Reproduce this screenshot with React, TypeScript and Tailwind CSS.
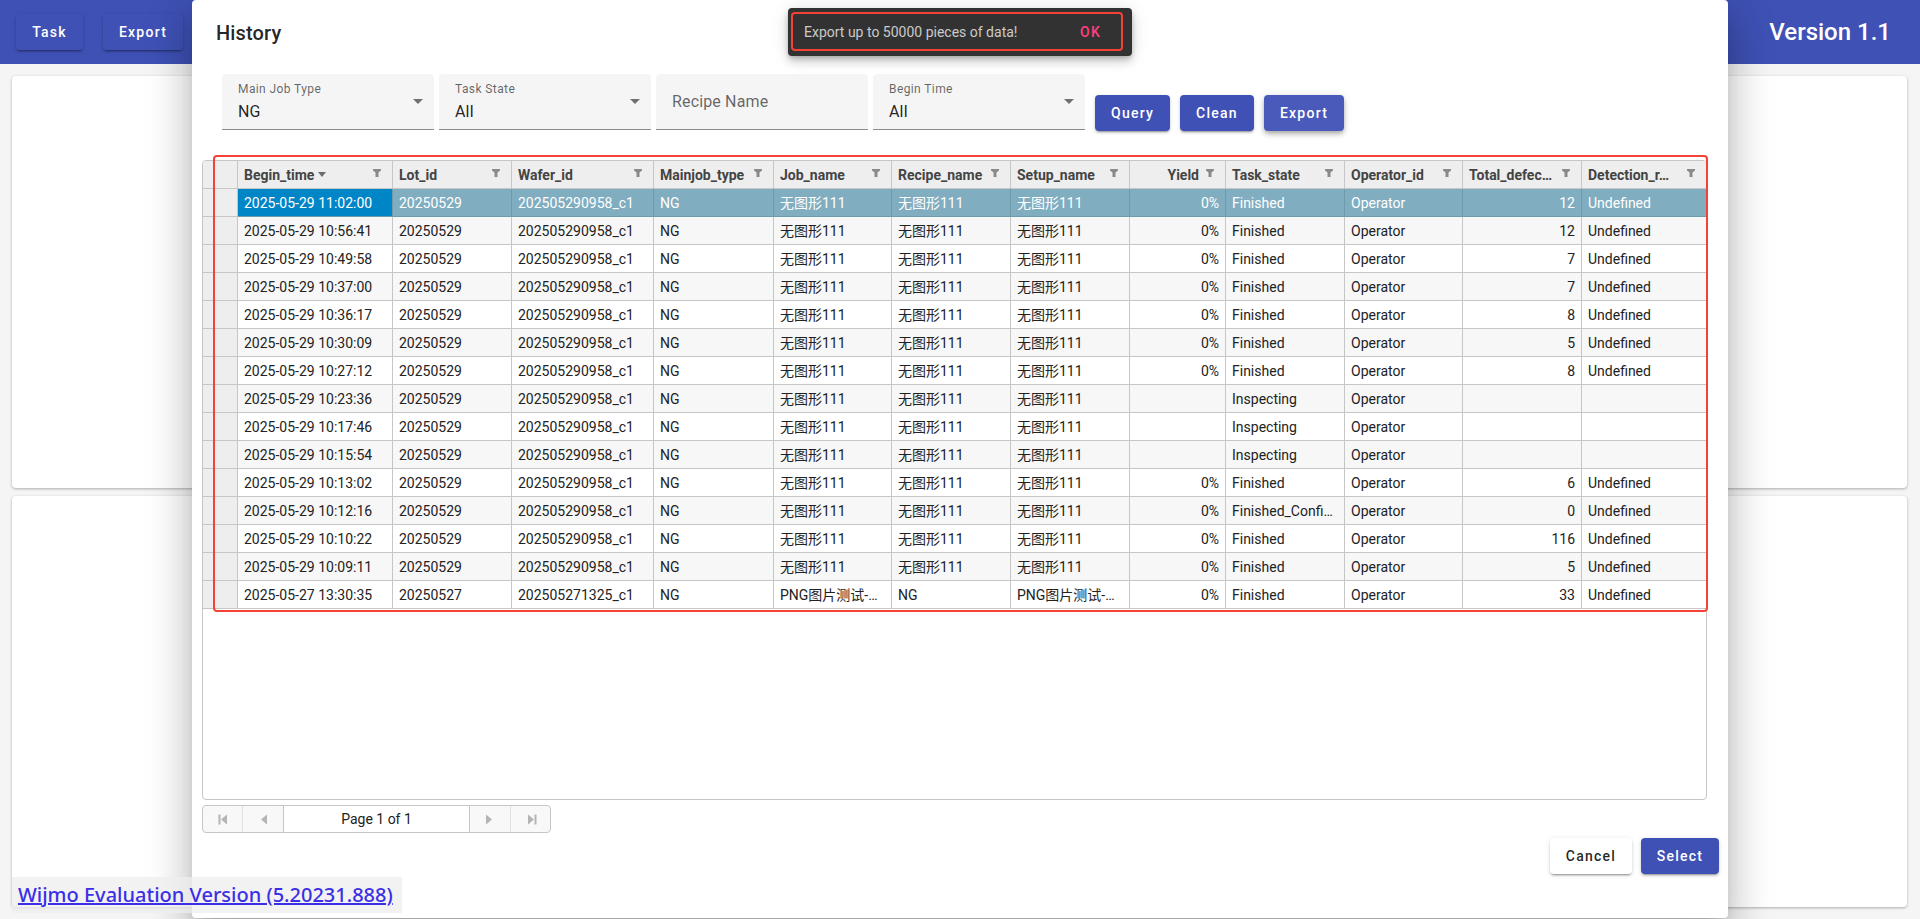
import { ChevronDown } from 'lucide-react'

const ROW_COLS = 'grid grid-cols-[35px_155px_119px_142px_120px_118px_119px_119px_96px_119px_118px_119px_124px]'
const FONT = "font-['Roboto',_'Noto_Sans_CJK_SC',_sans-serif]"

const headers = [
  { label: 'Begin_time', sort: true },
  { label: 'Lot_id' },
  { label: 'Wafer_id' },
  { label: 'Mainjob_type' },
  { label: 'Job_name' },
  { label: 'Recipe_name' },
  { label: 'Setup_name' },
  { label: 'Yield', right: true },
  { label: 'Task_state' },
  { label: 'Operator_id' },
  { label: 'Total_defec…' },
  { label: 'Detection_r…' },
]

const job = '无图形111'

const makeRow = (time: string, state: string, yieldVal: string, total: string, result: string) => [
  time, '20250529', '202505290958_c1', 'NG', job, job, job, yieldVal, state, 'Operator', total, result,
]

const rows = [
  makeRow('2025-05-29 11:02:00', 'Finished', '0%', '12', 'Undefined'),
  makeRow('2025-05-29 10:56:41', 'Finished', '0%', '12', 'Undefined'),
  makeRow('2025-05-29 10:49:58', 'Finished', '0%', '7', 'Undefined'),
  makeRow('2025-05-29 10:37:00', 'Finished', '0%', '7', 'Undefined'),
  makeRow('2025-05-29 10:36:17', 'Finished', '0%', '8', 'Undefined'),
  makeRow('2025-05-29 10:30:09', 'Finished', '0%', '5', 'Undefined'),
  makeRow('2025-05-29 10:27:12', 'Finished', '0%', '8', 'Undefined'),
  makeRow('2025-05-29 10:23:36', 'Inspecting', '', '', ''),
  makeRow('2025-05-29 10:17:46', 'Inspecting', '', '', ''),
  makeRow('2025-05-29 10:15:54', 'Inspecting', '', '', ''),
  makeRow('2025-05-29 10:13:02', 'Finished', '0%', '6', 'Undefined'),
  makeRow('2025-05-29 10:12:16', 'Finished_Confi…', '0%', '0', 'Undefined'),
  makeRow('2025-05-29 10:10:22', 'Finished', '0%', '116', 'Undefined'),
  makeRow('2025-05-29 10:09:11', 'Finished', '0%', '5', 'Undefined'),
  [
    '2025-05-27 13:30:35', '20250527', '202505271325_c1', 'NG', 'PNG图片测试-…', 'NG', 'PNG图片测试-…',
    '0%', 'Finished', 'Operator', '33', 'Undefined',
  ],
]

// columns 7 (Yield) and 10 (Total) hold right aligned numbers
const rightCols = [7, 10]

function FilterIcon() {
  return (
    <svg width="8" height="8" viewBox="0 0 8 8" className="shrink-0 -mt-[3px]">
      <polygon points="0,0 8,0 8,1.5 5.5,3.5 5.5,8 2.5,8 2.5,3.5 0,1.5" fill="#8a8a8a" />
    </svg>
  )
}

function SelectField({ label, value }: { label: string; value: string }) {
  return (
    <div className="relative h-[56px] w-[212px] rounded-t bg-[#f5f5f5] border-b border-[#8c8c8c] pl-4 pt-[8px]">
      <div className="text-[12px] leading-[14px] tracking-[0.4px] text-[rgba(0,0,0,0.6)]">{label}</div>
      <div className="mt-[4px] text-[16px] leading-[24px] tracking-[0.15px] text-[rgba(0,0,0,0.87)]">{value}</div>
      <span className="absolute right-[11px] top-[25px] h-0 w-0 border-x-[5px] border-t-[5px] border-x-transparent border-t-[rgba(0,0,0,0.54)]" />
    </div>
  )
}

function RaisedButton({ children, className }: { children: React.ReactNode; className: string }) {
  return (
    <button
      className={`h-[36px] rounded px-4 text-[14px] font-medium tracking-[1.25px] shadow-[0_3px_1px_-2px_rgba(0,0,0,0.2),0_2px_2px_0_rgba(0,0,0,0.14),0_1px_5px_0_rgba(0,0,0,0.12)] ${className}`}
    >
      {children}
    </button>
  )
}

function PagerIcon({ dir, bar }: { dir: 'left' | 'right'; bar?: boolean }) {
  const left = dir === 'left'
  return (
    <svg width="10" height="11" viewBox="0 0 10 11">
      {left ? <polygon points="9,0.5 9,10.5 3,5.5" fill="#b4b4b4" /> : <polygon points="1,0.5 1,10.5 7,5.5" fill="#b4b4b4" />}
      {bar && (left ? <rect x="0.5" y="0.5" width="2" height="10" fill="#b4b4b4" /> : <rect x="7.5" y="0.5" width="2" height="10" fill="#b4b4b4" />)}
    </svg>
  )
}

function HistoryGrid() {
  return (
    <div className="h-[640px] w-[1505px] overflow-hidden rounded border border-[#c6c6c6] bg-white text-[14px] leading-none text-[#222]">
      <div className={`${ROW_COLS} h-[28px] bg-[#eeeeee] font-bold text-[#444]`}>
        <div className="border-r border-b border-[#c6c6c6]" />
        {headers.map((h, i) => (
          <div
            key={h.label}
            className={`flex items-center border-b border-[#c6c6c6] pl-[6px] pr-[11px] ${i < headers.length - 1 ? 'border-r' : ''} ${h.right ? 'justify-end gap-[7px]' : 'justify-between'}`}
          >
            <span className="flex items-center gap-[4px] whitespace-nowrap">
              {h.label}
              {h.sort && <span className="h-0 w-0 border-x-[4px] border-t-[5px] border-x-transparent border-t-[#6b6b6b]" />}
            </span>
            <FilterIcon />
          </div>
        ))}
      </div>
      {rows.map((row, r) => {
        const selected = r === 0
        const alt = r % 2 === 1
        return (
          <div key={row[0]} className={`${ROW_COLS} h-[28px]`}>
            <div className="border-r border-b border-[#c6c6c6] bg-[#eeeeee]" />
            {row.map((val, c) => (
              <div
                key={c}
                className={`flex items-center overflow-hidden whitespace-nowrap border-b px-[6px] ${c < row.length - 1 ? 'border-r' : ''} ${rightCols.includes(c) ? 'justify-end' : ''} ${
                  selected
                    ? `border-[#6e9aac] text-white ${c === 0 ? 'bg-[#0085c7]' : 'bg-[#80adbf]'}`
                    : `border-[#c6c6c6] ${alt ? 'bg-[#f7f7f7]' : 'bg-white'}`
                }`}
              >
                {val}
              </div>
            ))}
          </div>
        )
      })}
    </div>
  )
}

function Pager() {
  return (
    <div className="mt-[5px] grid h-[28px] w-[349px] grid-cols-[40px_41px_186px_41px_41px] overflow-hidden rounded border border-[#c6c6c6] bg-[#f8f8f8] text-[14px] text-[#222]">
      <div className="flex items-center justify-center border-r border-[#e2e2e2]"><PagerIcon dir="left" bar /></div>
      <div className="flex items-center justify-center border-r border-[#c6c6c6]"><PagerIcon dir="left" /></div>
      <div className="flex items-center justify-center border-r border-[#c6c6c6] bg-white">Page 1 of 1</div>
      <div className="flex items-center justify-center border-r border-[#e2e2e2]"><PagerIcon dir="right" /></div>
      <div className="flex items-center justify-center"><PagerIcon dir="right" bar /></div>
    </div>
  )
}

export default function App() {
  return (
    <div className={`relative flex h-screen flex-col overflow-hidden bg-[#f5f5f5] ${FONT}`}>
      <header className="flex h-16 shrink-0 items-center justify-between bg-[#3f51b5] pl-4 pr-[29px] text-white">
        <div className="flex items-center gap-5">
          <RaisedButton className="w-[67px] bg-[#3f51b5] !px-0 text-white">Task</RaisedButton>
          <RaisedButton className="w-[80px] bg-[#3f51b5] !px-0 text-white">Export</RaisedButton>
        </div>
        <span className="text-[24px] font-medium">Version 1.1</span>
      </header>

      <main className="flex flex-1 flex-col gap-2 pb-[12px] pl-3 pr-[13px] pt-3">
        <div className="flex-1 rounded bg-white shadow-[0_1px_3px_rgba(0,0,0,0.3)]" />
        <div className="flex-1 rounded bg-white shadow-[0_1px_3px_rgba(0,0,0,0.3)]" />
      </main>

      {/* history dialog */}
      <div className="absolute left-[192px] top-0 flex h-[918px] w-[1536px] flex-col rounded bg-white pl-[10px] shadow-[0_11px_15px_-7px_rgba(0,0,0,0.2),0_24px_38px_3px_rgba(0,0,0,0.14),0_9px_46px_8px_rgba(0,0,0,0.12)]">
        <h2 className="flex h-[74px] shrink-0 items-start pl-[14px] pt-[21px] text-[20px] font-medium leading-[24px] tracking-[0.15px] text-[rgba(0,0,0,0.87)]">
          History
        </h2>

        <div className="flex h-[57px] items-start gap-[5px] pl-[20px]">
          <SelectField label="Main Job Type" value="NG" />
          <SelectField label="Task State" value="All" />
          <div className="flex h-[56px] w-[212px] items-center rounded-t border-b border-[#8c8c8c] bg-[#f5f5f5] pl-4 text-[16px] tracking-[0.15px] text-[rgba(0,0,0,0.6)]">
            Recipe Name
          </div>
          <SelectField label="Begin Time" value="All" />
          <div className="ml-[5px] mt-[21px] flex gap-[10px]">
            <RaisedButton className="bg-[#3f51b5] text-white">Query</RaisedButton>
            <RaisedButton className="bg-[#3f51b5] text-white">Clean</RaisedButton>
            <RaisedButton className="bg-[#4a5abb] text-white !shadow-[0_2px_4px_-1px_rgba(0,0,0,0.2),0_4px_5px_0_rgba(0,0,0,0.14),0_1px_10px_0_rgba(0,0,0,0.12)]">Export</RaisedButton>
          </div>
        </div>

        <div className="mt-[29px]">
          <HistoryGrid />
        </div>
        <Pager />

        <div className="mt-[5px] flex justify-end gap-[9px] pr-[9px]">
          <RaisedButton className="w-[82px] bg-white !px-0 text-[rgba(0,0,0,0.87)]">Cancel</RaisedButton>
          <RaisedButton className="w-[78px] bg-[#3f51b5] !px-0 text-white">Select</RaisedButton>
        </div>

        {/* red annotation around the table */}
        <div className="pointer-events-none absolute left-[21px] top-[155px] h-[457px] w-[1495px] rounded border-2 border-[#f44336]" />
      </div>

      {/* snackbar */}
      <div className="absolute left-1/2 top-2 flex h-[48px] w-[344px] -translate-x-1/2 items-center justify-between rounded bg-[#323232] pl-4 pr-[31px] text-[14px] shadow-[0_3px_5px_-1px_rgba(0,0,0,0.2),0_6px_10px_0_rgba(0,0,0,0.14),0_1px_18px_0_rgba(0,0,0,0.12)]">
        <span className="text-[rgba(255,255,255,0.75)]">Export up to 50000 pieces of data!</span>
        <span className="font-medium tracking-[1.25px] text-[#ff4081]">OK</span>
        <div className="pointer-events-none absolute bottom-[5px] left-[3px] right-[9px] top-[4px] rounded border-2 border-[#f44336]" />
      </div>

      {/* licence watermark */}
      <div className="absolute left-[12px] top-[877px] flex h-[36px] w-[390px] items-center bg-[rgba(238,238,238,0.75)] pl-[6px] font-['Noto_Sans',_sans-serif] text-[20px] font-medium text-[#3b2fe6] underline">
        Wijmo Evaluation Version (5.20231.888)
      </div>
    </div>
  )
}
